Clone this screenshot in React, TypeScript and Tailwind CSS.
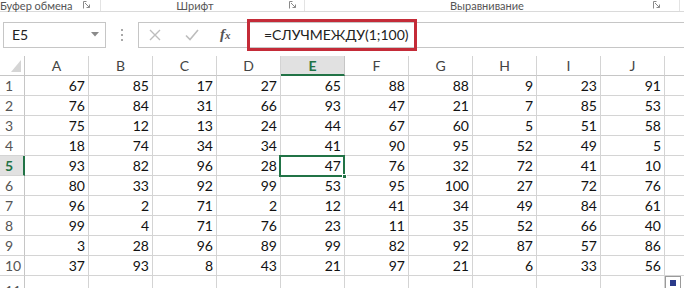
import React from 'react';

const COLS = ['A', 'B', 'C', 'D', 'E', 'F', 'G', 'H', 'I', 'J'];

const DATA: number[][] = [
  [67, 85, 17, 27, 65, 88, 88, 9, 23, 91],
  [76, 84, 31, 66, 93, 47, 21, 7, 85, 53],
  [75, 12, 13, 24, 44, 67, 60, 5, 51, 58],
  [18, 74, 34, 34, 41, 90, 95, 52, 49, 5],
  [93, 82, 96, 28, 47, 76, 32, 72, 41, 10],
  [80, 33, 92, 99, 53, 95, 100, 27, 72, 76],
  [96, 2, 71, 2, 12, 41, 34, 49, 84, 61],
  [99, 4, 71, 76, 23, 11, 35, 52, 66, 40],
  [3, 28, 96, 89, 99, 82, 92, 87, 57, 86],
  [37, 93, 8, 43, 21, 97, 21, 6, 33, 56],
];

const SEL_COL = 4;
const SEL_ROW = 4;

function Launcher() {
  return (
    <svg width="8" height="8" viewBox="0 0 8 8" className="text-[#8a8a8a]">
      <path d="M0.5 7.5V0.5h3" fill="none" stroke="currentColor" strokeWidth="1" />
      <path d="M2 2l4.5 4.5M6.5 3.5v3h-3" fill="none" stroke="currentColor" strokeWidth="1" />
    </svg>
  );
}

function RibbonLabels() {
  return (
    <div className="flex h-[12px] border-b border-[#dadada] text-[11px] leading-[11px] text-[#555]">
      <div className="relative flex w-[101px] items-start border-r border-[#e3e3e3]">
        <span>Буфер обмена</span>
        <span className="absolute right-[9px] bottom-[2px]"><Launcher /></span>
      </div>
      <div className="relative flex w-[204px] items-start justify-center border-r border-[#e3e3e3]">
        <span className="mr-[15px]">Шрифт</span>
        <span className="absolute right-[7px] bottom-[2px]"><Launcher /></span>
      </div>
      <div className="relative flex w-[375px] items-start justify-center border-r border-[#e3e3e3]">
        <span className="mr-[10px]">Выравнивание</span>
        <span className="absolute right-[18px] bottom-[2px]"><Launcher /></span>
      </div>
    </div>
  );
}

function FormulaBar() {
  return (
    <div className="flex h-[45px] items-center">
      {/* name box */}
      <div className="ml-[3px] flex h-[26px] w-[103px] items-center justify-between border border-[#c6c6c6] pl-[8px] pr-[6px] text-[14px] text-[#222]">
        <span>E5</span>
        <svg width="8" height="5" viewBox="0 0 8 5"><path d="M0 0h8L4 4.5z" fill="#8a8a8a" /></svg>
      </div>
      {/* dots */}
      <div className="ml-[14px] flex w-[4px] flex-col items-center gap-[3px]">
        <span className="h-[2px] w-[2px] bg-[#a8a8a8]" />
        <span className="h-[2px] w-[2px] bg-[#a8a8a8]" />
        <span className="h-[2px] w-[2px] bg-[#a8a8a8]" />
      </div>
      {/* buttons + input */}
      <div className="ml-[14px] flex h-[26px] flex-1 items-center border-y border-l border-[#c6c6c6]">
        <div className="flex w-[108px] items-center">
          <svg width="12" height="12" viewBox="0 0 12 12" className="ml-[10px]">
            <path d="M1 1l10 10M11 1L1 11" stroke="#bdbdbd" strokeWidth="1.4" />
          </svg>
          <svg width="14" height="12" viewBox="0 0 14 12" className="ml-[24px]">
            <path d="M1 6.5l4 4L13 1" fill="none" stroke="#bdbdbd" strokeWidth="1.6" />
          </svg>
          <span className="ml-[21px] font-['Liberation_Serif',serif] text-[15px] italic font-bold text-[#555]">
            f<span className="text-[11px]">x</span>
          </span>
        </div>
        <div className="relative h-full flex-1">
          <div className="absolute left-0 top-[-4px] flex h-[32px] w-[170px] items-center border-[3px] border-[#c42b38] pl-[14px] text-[14px] text-[#222]">
            =СЛУЧМЕЖДУ(1;100)
          </div>
        </div>
      </div>
    </div>
  );
}

function Grid() {
  return (
    <div className="relative mt-[-1px]">
      <div className="grid grid-cols-[25px_repeat(10,64px)_1fr] text-[14px]">
        {/* header */}
        <div className="flex h-[20px] items-center justify-end border-r border-b border-[#c6c6c6] pr-[3px]">
          <svg width="10" height="12" viewBox="0 0 10 12"><path d="M10 0v12H0z" fill="#d5d5d5" /></svg>
        </div>
        {COLS.map((c, i) => (
          <div
            key={c}
            className={
              i === SEL_COL
                ? 'flex h-[20px] items-center justify-center border-r border-b-2 border-r-[#c6c6c6] border-b-[#217346] bg-[#e1e1e1] font-bold text-[#217346]'
                : 'flex h-[20px] items-center justify-center border-r border-b border-[#d4d4d4] border-b-[#c6c6c6] text-[#444]'
            }
          >
            {c}
          </div>
        ))}
        <div className="h-[20px] border-b border-[#c6c6c6]" />

        {DATA.map((row, r) => (
          <React.Fragment key={r}>
            <div
              className={
                r === SEL_ROW
                  ? 'flex h-[20px] items-center border-r-2 border-b border-r-[#217346] border-b-[#d4d4d4] bg-[#e1e1e1] pl-[5px] font-bold text-[#217346]'
                  : 'flex h-[20px] items-center border-r border-b border-[#c6c6c6] border-b-[#d4d4d4] pl-[5px] text-[#555]'
              }
            >
              {r + 1}
            </div>
            {row.map((v, c) => (
              <div
                key={c}
                className="flex h-[20px] items-center justify-end border-r border-b border-[#d4d4d4] pr-[3px] text-[#111]"
              >
                {v}
              </div>
            ))}
            <div className="h-[20px] border-b border-[#d4d4d4]" />
          </React.Fragment>
        ))}

        <div className="flex h-[20px] items-start border-r border-[#c6c6c6] pl-[5px] pt-[4px] text-[#555]">11</div>
        {COLS.map((c) => (
          <div key={c} className="h-[20px] border-r border-[#d4d4d4]" />
        ))}
        <div className="h-[20px]" />
      </div>

      {/* selected cell */}
      <div className="absolute left-[279px] top-[99px] h-[22px] w-[66px] border-2 border-[#217346]">
        <div className="absolute -bottom-[4px] -right-[4px] h-[5px] w-[5px] border border-white bg-[#217346]" />
      </div>

      {/* quick analysis icon */}
      <div className="absolute left-[665px] top-[220px] z-10 h-[14px] w-[16px] border border-[#9a9a9a] bg-white">
        <div className="ml-[4px] mt-[3px] h-[6px] w-[6px] bg-[#2b3a8a]" />
      </div>
    </div>
  );
}

export default function App() {
  return (
    <div className="h-[288px] w-[684px] overflow-hidden bg-white font-['Lato','Open_Sans',sans-serif]">
      <RibbonLabels />
      <FormulaBar />
      <Grid />
    </div>
  );
}
